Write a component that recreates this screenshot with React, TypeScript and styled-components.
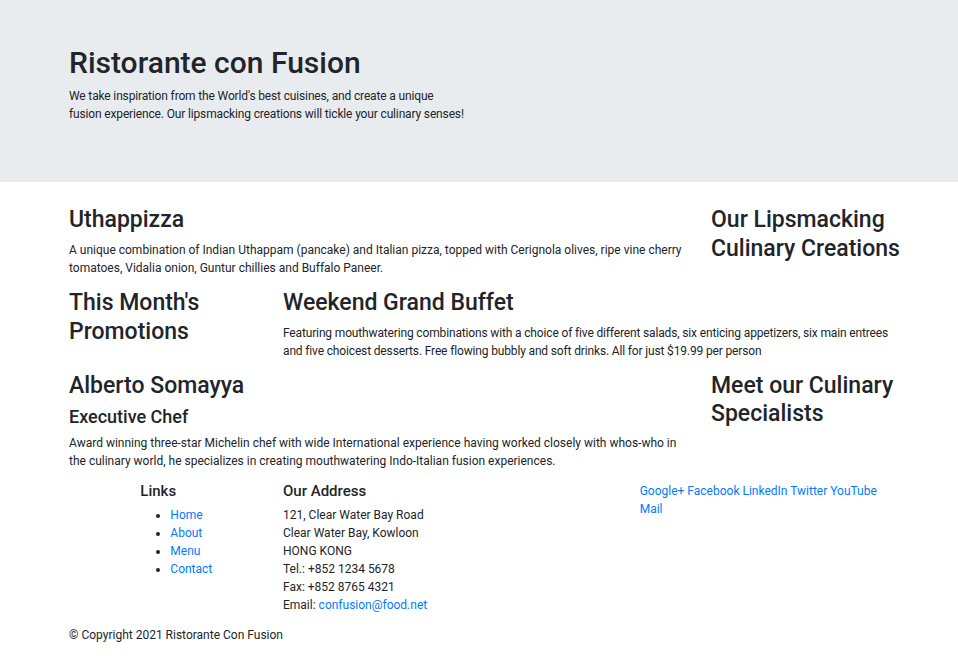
import React from "react";
import styled, { createGlobalStyle } from "styled-components";

const GlobalStyle = createGlobalStyle`
  html, body {
    margin: 0;
    padding: 0;
    background: #ffffff;
  }
  body {
    font-family: Roboto, "Liberation Sans", Arial, sans-serif;
    font-size: 12px;
    line-height: 18px;
    color: #212529;
  }
  *, *::before, *::after { box-sizing: border-box; }
`;

const Jumbotron = styled.header`
  background: #e9ecef;
  padding: 45px 0 47px;
  margin-bottom: 24px;
`;

const Container = styled.div`
  width: 856px;
  margin-left: 57.75px;
`;

const Row = styled.div`
  display: grid;
  grid-template-columns: repeat(12, 1fr);
  align-items: start;
`;

const Col = styled.div<{ $span: number; $offset?: number; $flushRight?: boolean }>`
  grid-column: ${(p) =>
    p.$offset !== undefined ? `${p.$offset + 1} / span ${p.$span}` : `span ${p.$span}`};
  padding: 0 ${(p) => (p.$flushRight ? "0" : "11.25px")} 0 11.25px;
  min-width: 0;
`;

const Display = styled.h1`
  margin: 0 0 6px;
  font-size: 30px;
  line-height: 36px;
  font-weight: 500;
`;

const Text = styled.p<{ $tight?: boolean }>`
  margin: 0 0 12px;
  font-size: 12px;
  line-height: 18px;
  letter-spacing: ${(p) => (p.$tight ? "-0.15px" : "normal")};
`;

const Title = styled.h2`
  margin: 0 0 6px;
  font-size: 23px;
  line-height: 28.8px;
  font-weight: 500;
`;

const Subtitle = styled.h4`
  margin: 0 0 6px;
  font-size: 18px;
  line-height: 21.6px;
  font-weight: 500;
`;

const Footer = styled.footer`
  padding-bottom: 24px;
`;

const FooterHeading = styled.h5`
  margin: 0 0 6px;
  font-size: 15px;
  line-height: 18px;
  font-weight: 500;
`;

const LinkList = styled.ul`
  margin: 0 0 12px;
  padding-left: 30px;
  list-style: disc;
`;

const Address = styled.address`
  margin: 0 0 12px;
  font-style: normal;
  line-height: 18px;
`;

const Social = styled.div`
  max-width: 245px;
`;

const Link = styled.a`
  color: #007bff;
  text-decoration: none;
`;

const links = ["Home", "About", "Menu", "Contact"];
const social = ["Google+", "Facebook", "LinkedIn", "Twitter", "YouTube", "Mail"];

export default function App() {
  return (
    <>
      <GlobalStyle />
      <Jumbotron>
        <Container>
          <Row>
            <Col $span={6} $flushRight>
              <Display>Ristorante con Fusion</Display>
              <Text $tight>
                We take inspiration from the World's best cuisines, and create a unique
                <br />
                fusion experience. Our lipsmacking creations will tickle your culinary senses!
              </Text>
            </Col>
          </Row>
        </Container>
      </Jumbotron>

      <Container>
        <Row>
          <Col $span={9}>
            <Title>Uthappizza</Title>
            <Text>
              A unique combination of Indian Uthappam (pancake) and Italian pizza, topped with
              Cerignola olives, ripe vine cherry tomatoes, Vidalia onion, Guntur chillies and
              Buffalo Paneer.
            </Text>
          </Col>
          <Col $span={3} $flushRight>
            <Title>Our Lipsmacking Culinary Creations</Title>
          </Col>
        </Row>

        <Row>
          <Col $span={3}>
            <Title>This Month's Promotions</Title>
          </Col>
          <Col $span={9}>
            <Title>Weekend Grand Buffet</Title>
            <Text $tight>
              Featuring mouthwatering combinations with a choice of five different salads, six
              enticing appetizers, six main entrees and five choicest desserts. Free flowing
              bubbly and soft drinks. All for just $19.99 per person
            </Text>
          </Col>
        </Row>

        <Row>
          <Col $span={9}>
            <Title>Alberto Somayya</Title>
            <Subtitle>Executive Chef</Subtitle>
            <Text>
              Award winning three-star Michelin chef with wide International experience having
              worked closely with whos-who in the culinary world, he specializes in creating
              mouthwatering Indo-Italian fusion experiences.
            </Text>
          </Col>
          <Col $span={3} $flushRight>
            <Title>Meet our Culinary Specialists</Title>
          </Col>
        </Row>
      </Container>

      <Footer>
        <Container>
          <Row>
            <Col $span={2} $offset={1}>
              <FooterHeading>Links</FooterHeading>
              <LinkList>
                {links.map((l) => (
                  <li key={l}>
                    <Link href="#">{l}</Link>
                  </li>
                ))}
              </LinkList>
            </Col>
            <Col $span={5} $offset={3}>
              <FooterHeading>Our Address</FooterHeading>
              <Address>
                121, Clear Water Bay Road
                <br />
                Clear Water Bay, Kowloon
                <br />
                HONG KONG
                <br />
                Tel.: +852 1234 5678
                <br />
                Fax: +852 8765 4321
                <br />
                Email: <Link href="#">confusion@food.net</Link>
              </Address>
            </Col>
            <Col $span={4} $offset={8}>
              <Social>
                {social.map((s, i) => (
                  <React.Fragment key={s}>
                    <Link href="#">{s}</Link>
                    {i < social.length - 1 ? " " : null}
                  </React.Fragment>
                ))}
              </Social>
            </Col>
          </Row>
          <Row>
            <Col $span={12}>
              <Text>© Copyright 2021 Ristorante Con Fusion</Text>
            </Col>
          </Row>
        </Container>
      </Footer>
    </>
  );
}
